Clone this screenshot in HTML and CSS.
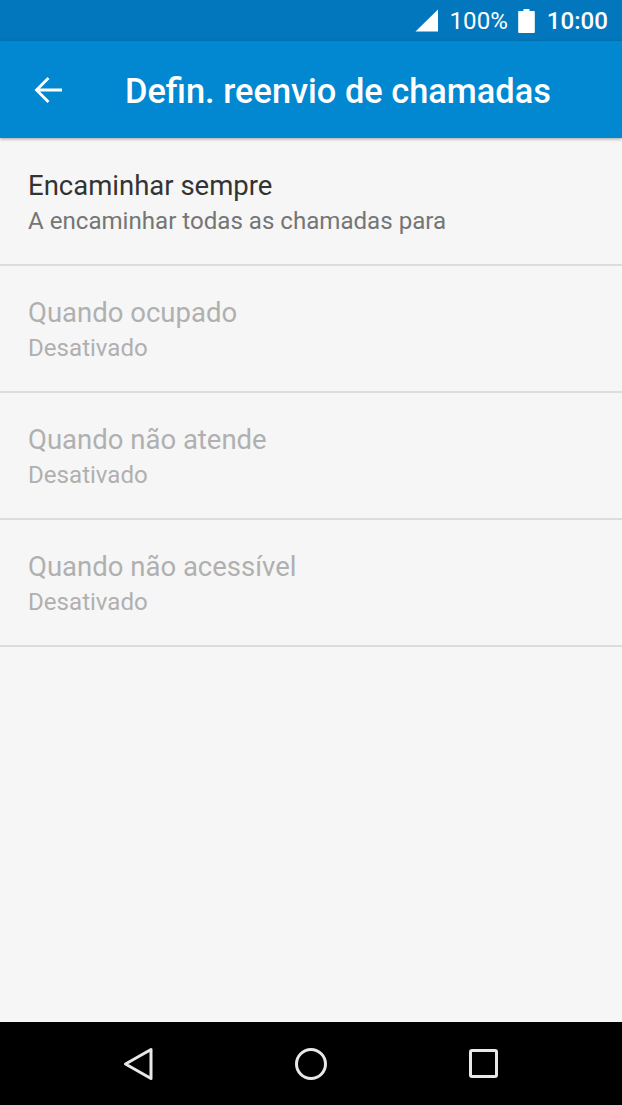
FILE: index.html
```html
<!DOCTYPE html>
<html lang="pt">
<head>
<meta charset="utf-8">
<title>Defin. reenvio de chamadas</title>
<link rel="stylesheet" href="styles.css">
</head>
<body>
<div class="screen">
  <header class="status">
    <svg class="signal" width="24" height="24" viewBox="0 0 24 24"><path d="M0.5 22.5 L23 0.5 V22.5 Z" fill="#fff"/></svg>
    <span class="pct">100%</span>
    <svg class="batt" width="17" height="24" viewBox="0 0 17 24"><path d="M5.5 0 H11.5 V2 H16 A0.8 0.8 0 0 1 16.8 3 V23 A1 1 0 0 1 16 24 H1 A1 1 0 0 1 0.2 23 V3 A0.8 0.8 0 0 1 1 2 H5.5 Z" fill="#fff"/></svg>
    <span class="time">10:00</span>
  </header>
  <div class="appbar">
    <svg class="back" width="30" height="28" viewBox="0 0 30 28"><path d="M15.5 2 L3.5 14 L15.5 26 M3.5 14 H29" fill="none" stroke="#fff" stroke-width="2.8"/></svg>
    <h1 class="title">Defin. reenvio de chamadas</h1>
  </div>
  <main class="list">
    <div class="row">
      <div class="label">Encaminhar sempre</div>
      <div class="sub">A encaminhar todas as chamadas para</div>
    </div>
    <div class="row off">
      <div class="label">Quando ocupado</div>
      <div class="sub">Desativado</div>
    </div>
    <div class="row off">
      <div class="label">Quando não atende</div>
      <div class="sub">Desativado</div>
    </div>
    <div class="row off">
      <div class="label">Quando não acessível</div>
      <div class="sub">Desativado</div>
    </div>
  </main>
  <nav class="navbar">
    <svg width="30" height="34" viewBox="0 0 30 34"><path d="M28 2.5 V31.5 L2.5 17 Z" fill="none" stroke="#e8e8e8" stroke-width="3" stroke-linejoin="round"/></svg>
    <svg width="32" height="32" viewBox="0 0 32 32"><circle cx="16" cy="16" r="14.5" fill="none" stroke="#e8e8e8" stroke-width="3"/></svg>
    <svg width="29" height="29" viewBox="0 0 29 29"><rect x="1.5" y="1.5" width="26" height="26" rx="1.5" fill="none" stroke="#e8e8e8" stroke-width="3"/></svg>
  </nav>
</div>
</body>
</html>
```
FILE: styles.css
```css
* { box-sizing: border-box; }
html, body { margin: 0; padding: 0; }
body { font-family: Roboto, "Noto Sans", sans-serif; background: #f6f6f6; }
.screen { width: 622px; height: 1105px; display: flex; flex-direction: column; overflow: hidden; }
.status { height: 41px; flex: none; background: #0277bd; display: flex; align-items: center; justify-content: flex-end; padding-right: 14px; color: #fff; font-size: 24.1px; }
.signal { margin-right: 11px; }
.pct { margin-right: 10px; }
.batt { margin-right: 12px; }
.time { font-weight: 500; }
.appbar { height: 97px; flex: none; background: #0288d1; display: flex; align-items: center; padding-left: 33px; box-shadow: 0 1px 3px rgba(0,0,0,.35); position: relative; }
.back { flex: none; margin-right: 62px; }
.title { margin: 2px 0 0; color: #fff; font-size: 34.4px; font-weight: 500; line-height: 40px; white-space: nowrap; }
.list { flex: 1; background: #f6f6f6; padding-top: 1px; }
.row { height: 127px; padding: 28px 28px 0; border-bottom: 2px solid #dcdcdc; }
.label { font-size: 27.5px; line-height: 38px; color: #333; }
.sub { font-size: 24.1px; line-height: 32px; color: #757575; }
.off .label, .off .sub { color: #b0b0b0; }
.navbar { height: 83px; flex: none; background: #000; display: flex; align-items: center; padding-left: 123px; }
.navbar svg:nth-child(1) { margin-right: 142px; }
.navbar svg:nth-child(2) { margin-right: 142px; }
```
